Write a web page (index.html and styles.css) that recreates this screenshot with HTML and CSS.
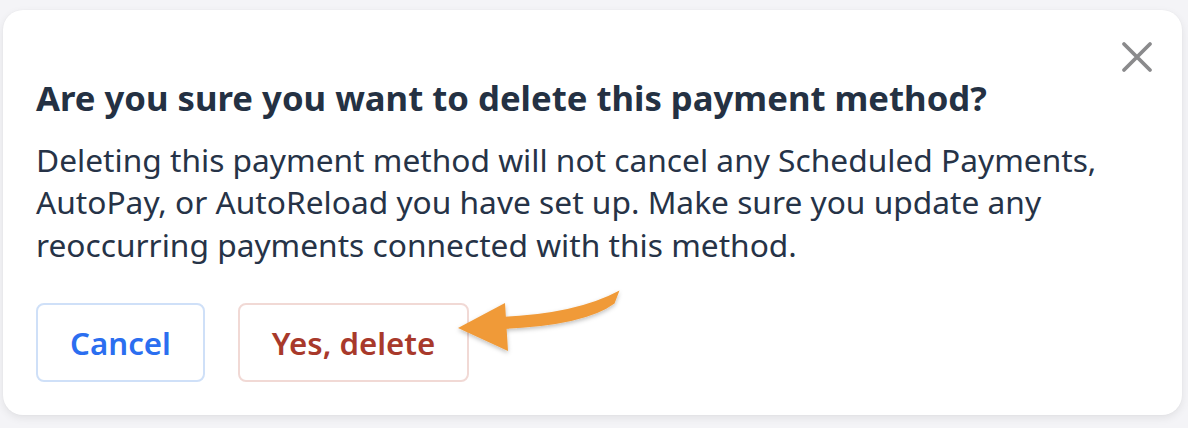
FILE: index.html
```html
<!DOCTYPE html>
<html lang="en">
<head>
<meta charset="utf-8">
<title>Delete payment method</title>
<link rel="stylesheet" href="styles.css">
</head>
<body>
<div class="page">
  <div class="dialog">
    <div class="dialog-header">
      <button class="close" aria-label="Close">
        <svg width="32" height="32" viewBox="0 0 32 32"><path d="M3 3L29 29M29 3L3 29" stroke="#8a8a8c" stroke-width="3.8" stroke-linecap="round" fill="none"/></svg>
      </button>
    </div>
    <h2 class="title">Are you sure you want to delete this payment method?</h2>
    <p class="body">Deleting this payment method will not cancel any Scheduled Payments, AutoPay, or AutoReload you have set up. Make sure you update any reoccurring payments connected with this method.</p>
    <div class="actions">
      <button class="btn btn-cancel">Cancel</button>
      <button class="btn btn-delete">Yes, delete</button>
    </div>
    <svg class="arrow" width="190" height="90" viewBox="440 270 190 90">
      <defs>
        <filter id="sh" x="-20%" y="-20%" width="140%" height="160%">
          <feDropShadow dx="0" dy="2" stdDeviation="2" flood-color="#000" flood-opacity="0.25"/>
        </filter>
      </defs>
      <g filter="url(#sh)" fill="#f09a38">
        <path d="M619.5 290.5 Q576 314 500 317 L502 329 Q585 325.5 614.5 303.5 Z"/>
        <path d="M458 328 L505 303 L508 351 Z"/>
      </g>
    </svg>
  </div>
</div>
</body>
</html>
```
FILE: styles.css
```css
* { box-sizing: border-box; }
html, body { margin: 0; padding: 0; background: #f4f4f7; }
body { font-family: "Noto Sans", "Open Sans", sans-serif; }
.page { padding: 10px 6px 13px 3px; }
.dialog {
  position: relative;
  background: #ffffff;
  border-radius: 20px;
  box-shadow: 0 3px 8px rgba(0,0,0,0.08), 0 0 2px rgba(0,0,0,0.04);
  padding: 31px 29px 33px 33px;
  display: flex;
  flex-direction: column;
}
.dialog-header { display: flex; justify-content: flex-end; height: 31px; }
.close { border: 0; background: none; padding: 0; margin: 0; width: 32px; height: 32px; cursor: pointer; }
.close svg { display: block; }
.title {
  margin: 4.5px 0 0 0;
  font-size: 34.7px;
  line-height: 42px;
  font-weight: 700;
  color: #243143;
}
.body {
  margin: 20px 0 0 0;
  font-size: 31.7px;
  line-height: 42.5px;
  color: #263347;
}
.actions { display: flex; gap: 33px; margin-top: 37px; }
.btn {
  font-family: inherit;
  font-size: 31.2px;
  font-weight: 600;
  height: 79px;
  background: #fff;
  border-radius: 8px;
  border: 2px solid;
  padding: 0;
}
.btn-cancel { width: 169px; color: #2b6ef0; border-color: #cfe0f8; }
.btn-delete { width: 231px; color: #a8392b; border-color: #f1d9d5; }
.arrow { position: absolute; left: 437px; top: 260px; }
```
